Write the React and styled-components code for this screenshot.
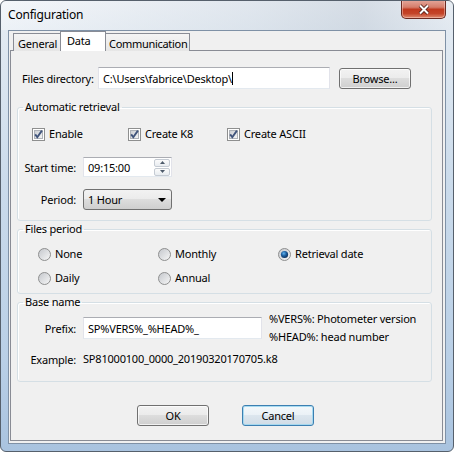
import styled, { createGlobalStyle } from "styled-components";

const Checkbox = ({ label }) => (
  <CheckItem>
    <svg width="13" height="13" viewBox="0 0 13 13">
      <defs>
        <linearGradient id="cbFill" x1="0" y1="0" x2="1" y2="1">
          <stop offset="0" stopColor="#c9ccd1" />
          <stop offset="1" stopColor="#f7f7f7" />
        </linearGradient>
      </defs>
      <rect x="0.5" y="0.5" width="12" height="12" fill="#fff" stroke="#8e8f8f" />
      <rect x="2.5" y="2.5" width="8" height="8" fill="url(#cbFill)" stroke="#aeb2b8" />
      <path d="M3.2 6.4 L5.3 9.2 L9.9 2.6" fill="none" stroke="#41557c" strokeWidth="1.9" />
    </svg>
    <span>{label}</span>
  </CheckItem>
);

const Radio = ({ label, checked }) => (
  <CheckItem>
    <svg width="13" height="13" viewBox="0 0 13 13">
      <defs>
        <linearGradient id="rbFill" x1="0" y1="0" x2="1" y2="1">
          <stop offset="0" stopColor="#c3c6cb" />
          <stop offset="1" stopColor="#f8f8f8" />
        </linearGradient>
        <radialGradient id="rbDot" cx="0.4" cy="0.35" r="0.7">
          <stop offset="0" stopColor="#5fb2ee" />
          <stop offset="0.5" stopColor="#1b5d9e" />
          <stop offset="1" stopColor="#0c2a52" />
        </radialGradient>
      </defs>
      <circle cx="6.5" cy="6.5" r="6" fill="url(#rbFill)" stroke="#8e8f8f" />
      {checked && <circle cx="6.5" cy="6.5" r="3.6" fill="url(#rbDot)" />}
    </svg>
    <span>{label}</span>
  </CheckItem>
);

const App = () => {
  return (
    <>
      <GlobalStyle />
      <Window>
        <TitleBar>
          <Title>Configuration</Title>
          <CloseButton>
            <svg width="14" height="11" viewBox="0 0 14 11">
              <path d="M3 1.5 L11 9.5 M11 1.5 L3 9.5" stroke="#4a1a14" strokeWidth="3.6" />
              <path d="M3 1.5 L11 9.5 M11 1.5 L3 9.5" stroke="#fff" strokeWidth="2" />
            </svg>
          </CloseButton>
        </TitleBar>

        <Client>
          <TabStrip>
            <Tab $w={48}>General</Tab>
            <Tab $w={46} $active>
              Data
            </Tab>
            <Tab $w={85} $tight>
              Communication
            </Tab>
          </TabStrip>

          <TabPanel>
            <DirRow>
              <DirLabel>Files directory:</DirLabel>
              <TextBox $width={232}>
                C:\Users\fabrice\Desktop\<Caret />
              </TextBox>
              <Button>Browse...</Button>
            </DirRow>

            <Group $mt={10}>
              <Legend>Automatic retrieval</Legend>
              <CheckRow>
                <Checkbox label="Enable" />
                <Checkbox label="Create K8" />
                <Checkbox label="Create ASCII" />
              </CheckRow>
              <FieldGrid $pt={15} $pb={10}>
                <FieldLabel>Start time:</FieldLabel>
                <SpinBox>
                  <span>09:15:00</span>
                  <SpinButtons>
                    <SpinButton>
                      <svg width="5" height="3" viewBox="0 0 5 3">
                        <path d="M0 3 L2.5 0 L5 3 Z" fill="#4d5a6a" />
                      </svg>
                    </SpinButton>
                    <SpinButton>
                      <svg width="5" height="3" viewBox="0 0 5 3">
                        <path d="M0 0 L2.5 3 L5 0 Z" fill="#4d5a6a" />
                      </svg>
                    </SpinButton>
                  </SpinButtons>
                </SpinBox>
                <FieldLabel>Period:</FieldLabel>
                <Select>
                  <span>1 Hour</span>
                  <svg width="8" height="4" viewBox="0 0 8 4">
                    <path d="M0 0 L8 0 L4 4 Z" fill="#000" />
                  </svg>
                </Select>
              </FieldGrid>
            </Group>

            <Group>
              <Legend>Files period</Legend>
              <RadioGrid>
                <Radio label="None" />
                <Radio label="Monthly" />
                <Radio label="Retrieval date" checked />
                <Radio label="Daily" />
                <Radio label="Annual" />
              </RadioGrid>
            </Group>

            <Group>
              <Legend>Base name</Legend>
              <FieldGrid $pt={0} $pb={14} $notes>
                <FieldLabel>Prefix:</FieldLabel>
                <TextBox $width={179}>SP%VERS%_%HEAD%_</TextBox>
                <Notes>
                  <div>%VERS%: Photometer version</div>
                  <div>%HEAD%: head number</div>
                </Notes>
                <FieldLabel>Example:</FieldLabel>
                <ExampleValue>SP81000100_0000_20190320170705.k8</ExampleValue>
              </FieldGrid>
            </Group>

            <ButtonRow>
              <Button>OK</Button>
              <Button $default>Cancel</Button>
            </ButtonRow>
          </TabPanel>
        </Client>
      </Window>
    </>
  );
};

// Styled Components
const GlobalStyle = createGlobalStyle`
  html, body {
    margin: 0;
    padding: 0;
    background: #ffffff;
  }

  body {
    font-family: "Noto Sans", "Segoe UI", sans-serif;
    font-size: 11px;
    letter-spacing: -0.2px;
    color: #000;
  }

  * {
    box-sizing: border-box;
  }
`;

const Window = styled.div`
  width: 454px;
  height: 452px;
  display: flex;
  flex-direction: column;
  border: 1px solid #56606c;
  border-radius: 6px;
  background: linear-gradient(
    180deg,
    #eef2f7 0px,
    #e2eaf2 30px,
    #cbdbeb 40%,
    #b9cfe6 80%,
    #a9c3df 100%
  );
  overflow: hidden;
`;

const TitleBar = styled.div`
  height: 29px;
  display: flex;
  justify-content: space-between;
  align-items: flex-start;
  padding-left: 7px;
  padding-right: 7px;
  background: linear-gradient(
    90deg,
    rgba(255, 255, 255, 0.35) 0%,
    rgba(214, 222, 231, 0.55) 55%,
    rgba(190, 200, 212, 0.5) 80%,
    rgba(225, 231, 238, 0.4) 100%
  );
`;

const Title = styled.div`
  font-size: 12px;
  line-height: 16px;
  margin-top: 6px;
  color: #000;
`;

const CloseButton = styled.div`
  width: 45px;
  height: 19px;
  margin-top: -1px;
  display: flex;
  align-items: center;
  justify-content: center;
  border: 1px solid #6b2a22;
  border-top: none;
  border-radius: 0 0 5px 5px;
  background: linear-gradient(
    180deg,
    #e5a89c 0%,
    #d57d6b 40%,
    #c0391f 52%,
    #c44429 75%,
    #de8a6e 100%
  );
  box-shadow: inset 0 0 0 1px rgba(255, 220, 210, 0.45);
`;

const Client = styled.div`
  flex: 1;
  margin: 0 7px 7px 7px;
  border: 1px solid #7f91a6;
  background: #f0f0f0;
  display: flex;
  flex-direction: column;
  padding: 0 2px 2px 1px;
`;

const TabStrip = styled.div`
  height: 20px;
  display: flex;
  align-items: flex-end;
  padding-left: 3px;
  margin-bottom: -1px;
`;

const Tab = styled.div`
  position: relative;
  width: ${(p) => p.$w}px;
  height: ${(p) => (p.$active ? "20px" : "18px")};
  padding: ${(p) => (p.$active ? "1px 0 0 6px" : p.$tight ? "2px 0 0 3px" : "2px 0 0 4px")};
  border: 1px solid #898c95;
  border-bottom: none;
  margin-left: -1px;
  line-height: 15px;
  white-space: nowrap;
  letter-spacing: ${(p) => (p.$tight ? "-0.3px" : "inherit")};
  z-index: ${(p) => (p.$active ? 1 : 0)};
  background: ${(p) =>
    p.$active ? "#ffffff" : "linear-gradient(180deg, #f4f4f4 0%, #e6e6e6 100%)"};

  &:first-child {
    margin-left: 0;
  }
`;

const TabPanel = styled.div`
  flex: 1;
  border: 1px solid #898c95;
  display: flex;
  flex-direction: column;
`;

const DirRow = styled.div`
  display: flex;
  align-items: center;
  gap: 9px;
  margin-top: 16px;
  padding-left: 11px;
  height: 22px;
`;

const DirLabel = styled.div`
  width: 67px;
  white-space: nowrap;
`;

const TextBox = styled.div`
  width: ${(p) => p.$width}px;
  height: 22px;
  display: flex;
  align-items: center;
  padding-left: 4px;
  background: #fff;
  border: 1px solid #e2e3ea;
  border-top-color: #abadb3;
  border-bottom-color: #e3e9ef;
  white-space: nowrap;
`;

const Caret = styled.span`
  display: inline-block;
  width: 1px;
  height: 13px;
  background: #000;
`;

const Button = styled.div`
  width: 72px;
  height: 21px;
  display: flex;
  align-items: center;
  justify-content: center;
  border: 1px solid ${(p) => (p.$default ? "#3c7fb1" : "#707070")};
  border-radius: 3px;
  background: ${(p) =>
    p.$default
      ? "linear-gradient(180deg, #f3f8fb 0%, #eaf1f6 49%, #dce6ee 50%, #d0dce6 100%)"
      : "linear-gradient(180deg, #f2f2f2 0%, #ebebeb 49%, #dddddd 50%, #cfcfcf 100%)"};
  box-shadow: inset 0 0 0 1px
    ${(p) => (p.$default ? "rgba(160, 215, 240, 0.9)" : "rgba(255, 255, 255, 0.7)")};
`;

const Group = styled.fieldset`
  margin: ${(p) => p.$mt || 0}px 10px 0 6px;
  padding: 0;
  min-width: 0;
  border: 1px solid #d5dfe5;
  border-radius: 3px;
  box-shadow: inset 1px 1px 0 #ffffff;
`;

const Legend = styled.legend`
  margin-left: 5px;
  padding: 0 2px;
  line-height: 16px;
`;

const CheckRow = styled.div`
  display: grid;
  grid-template-columns: 96px 99px auto;
  margin-top: 11px;
  padding-left: 14px;
  height: 16px;
  align-items: center;
`;

const CheckItem = styled.div`
  display: flex;
  align-items: center;
  gap: 4px;
  line-height: 16px;
  white-space: nowrap;

  svg {
    flex: none;
  }
`;

const FieldGrid = styled.div`
  display: grid;
  grid-template-columns: ${(p) => (p.$notes ? "58px 179px auto" : "58px 89px")};
  column-gap: 7px;
  row-gap: ${(p) => (p.$notes ? "5px" : "12px")};
  align-items: center;
  padding-top: ${(p) => p.$pt}px;
  padding-bottom: ${(p) => p.$pb}px;
`;

const FieldLabel = styled.div`
  text-align: right;
  white-space: nowrap;
`;

const SpinBox = styled(TextBox)`
  width: 89px;
  height: 20px;
  padding-right: 1px;
  justify-content: space-between;
`;

const SpinButtons = styled.div`
  display: flex;
  flex-direction: column;
  gap: 1px;
`;

const SpinButton = styled.div`
  width: 16px;
  height: 8px;
  display: flex;
  align-items: center;
  justify-content: center;
  border: 1px solid #c5cbd3;
  border-radius: 2px;
  background: linear-gradient(180deg, #fbfbfb 0%, #e8ecf0 100%);
`;

const Select = styled.div`
  width: 89px;
  height: 21px;
  display: flex;
  align-items: center;
  justify-content: space-between;
  padding: 0 5px 0 4px;
  border: 1px solid #707070;
  border-radius: 3px;
  background: linear-gradient(180deg, #f2f2f2 0%, #ebebeb 49%, #dddddd 50%, #cfcfcf 100%);
`;

const RadioGrid = styled.div`
  display: grid;
  grid-template-columns: 120px 120px auto;
  row-gap: 8px;
  padding: 9px 0 7px 20px;
`;

const Notes = styled.div`
  line-height: 18px;
  white-space: nowrap;
`;

const ExampleValue = styled.div`
  grid-column: span 2;
  line-height: 16px;
`;

const ButtonRow = styled.div`
  display: flex;
  justify-content: center;
  gap: 33px;
  margin-top: 23px;
  margin-right: 2px;
`;

export default App;
